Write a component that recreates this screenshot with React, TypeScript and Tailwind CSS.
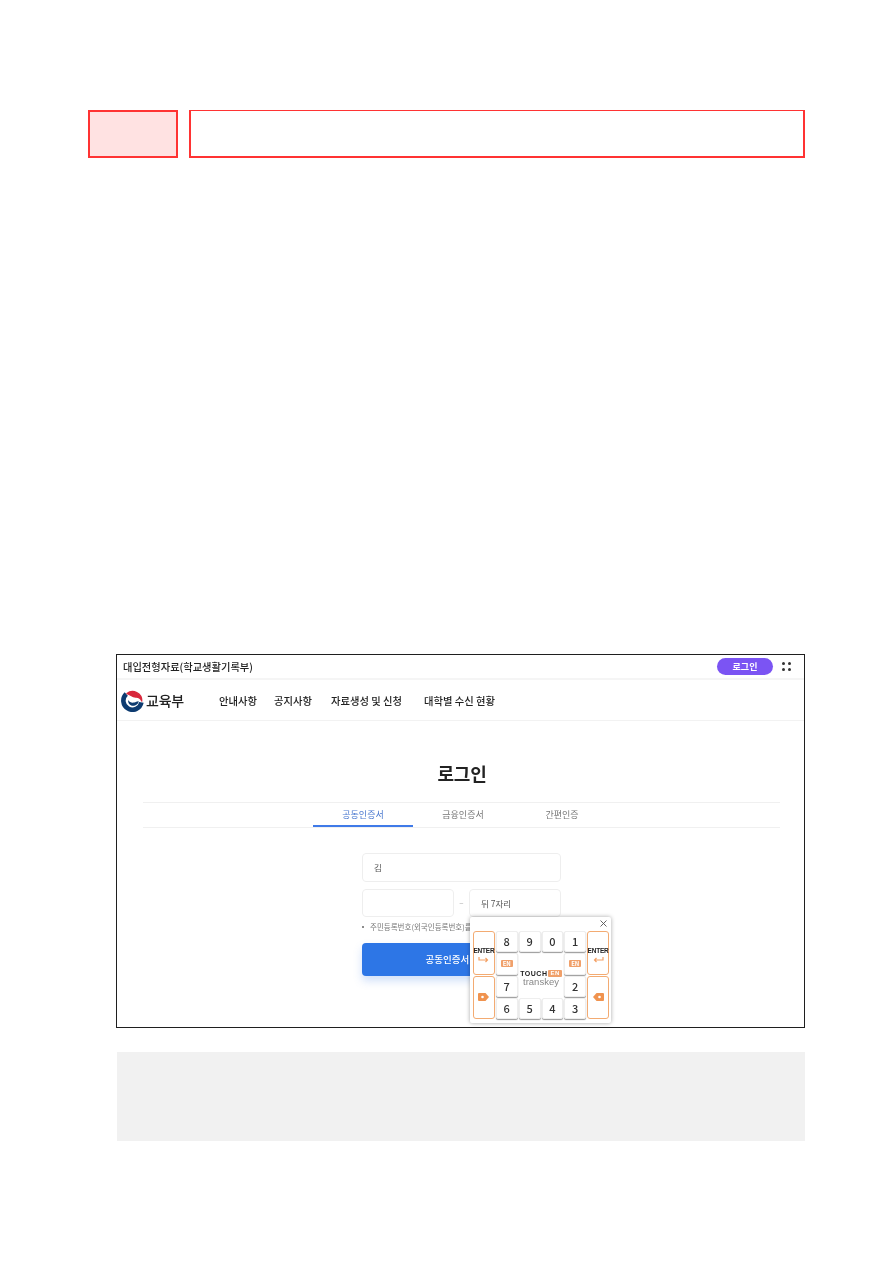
import React from "react";

const font = { fontFamily: '"Noto Sans CJK KR","Noto Sans",sans-serif' };

function Key({ children, className = "" }: { children?: React.ReactNode; className?: string }) {
  return (
    <div className={`flex items-center justify-center rounded-[2px] border border-[#eeeeee] bg-white shadow-[0_1px_1px_rgba(0,0,0,0.4)] text-[11px] font-medium text-[#333] ${className}`}>
      {children}
    </div>
  );
}

function En() {
  return (
    <span className="rounded-[1px] bg-[#f0a06a] px-[2px] text-[6px] leading-[7px] font-bold text-white">EN</span>
  );
}

function EnterKey({ flip }: { flip?: boolean }) {
  return (
    <div className="row-span-2 flex flex-col items-center justify-center rounded-[3px] border border-[#f3ab72] bg-white pt-[4px]">
      <span className="text-[6.5px] leading-[10px] font-bold tracking-[-0.2px] text-[#222]" style={{ fontFamily: '"Liberation Sans",sans-serif' }}>ENTER</span>
      <svg width="11" height="8" viewBox="0 0 11 8" fill="none" stroke="#f3a064" strokeWidth="1.2">
        {flip ? <path d="M10 1v3H1.500M3.500 2 1.500 4l2 2" /> : <path d="M1 1v3h8.500M7.500 2l2 2-2 2" />}
      </svg>
    </div>
  );
}

function BackKey({ side }: { side: "left" | "right" }) {
  const isLeftColumn = side === "left";
  return (
    <div className="row-span-2 flex items-center justify-center rounded-[3px] border border-[#f3ab72] bg-white">
      <svg width="11" height="8" viewBox="0 0 11 8">
        <path d={isLeftColumn ? "M1 0h6.500L11 4 7.500 8H1a1 1 0 0 1-1-1V1a1 1 0 0 1 1-1z" : "M10 0H3.500L0 4l3.500 4H10a1 1 0 0 0 1-1V1a1 1 0 0 0-1-1z"} fill="#f0934f" />
        <circle cx={isLeftColumn ? 4.5 : 6.5} cy="4" r="1.300" fill="#fff" />
      </svg>
    </div>
  );
}

function Keypad() {
  return (
    <div className="absolute left-[353px] top-[262px] h-[106px] w-[141px] rounded-[2px] bg-white pl-[3px] pr-[2px] pt-[14px] shadow-[0_0_4px_rgba(0,0,0,0.35)]">
      <svg className="absolute right-[4px] top-[3px]" width="7" height="7" viewBox="0 0 7 7" stroke="#555" strokeWidth="0.9">
        <path d="M0.5 0.5l6 6M6.5 0.5l-6 6" />
      </svg>
      <div className="grid h-[88px] grid-cols-6 grid-rows-4 gap-x-[1px] gap-y-[1px]">
        <EnterKey />
        <Key>8</Key>
        <Key>9</Key>
        <Key>0</Key>
        <Key>1</Key>
        <EnterKey flip />
        <Key><En /></Key>
        <div className="col-span-2 row-span-2 flex flex-col items-center justify-center pt-[6px]">
          <div className="flex items-center gap-[1px] text-[7px] leading-[7px] font-bold tracking-[0.5px] text-[#222]" style={{ fontFamily: '"Liberation Sans",sans-serif' }}>
            TOUCH<En />
          </div>
          <div className="text-[9.5px] leading-[9px] text-[#888]" style={{ fontFamily: '"Liberation Sans",sans-serif' }}>transkey</div>
        </div>
        <Key><En /></Key>
        <BackKey side="left" />
        <Key>7</Key>
        <Key>2</Key>
        <BackKey side="right" />
        <Key>6</Key>
        <Key>5</Key>
        <Key>4</Key>
        <Key>3</Key>
      </div>
    </div>
  );
}

function Logo() {
  return (
    <svg width="23" height="23" viewBox="0 0 24 24" className="shrink-0" fill="none">
      <circle cx="12" cy="12" r="12" fill="#ffffff" />
      <path d="M5.500 5.200A9.500 9.500 0 1 0 21.300 14" stroke="#0d3b70" strokeWidth="4.800" />
      <path d="M6.200 4.700A9.700 9.700 0 0 1 21.700 12.500C20.500 9 18 8.200 15.500 8.300 12 8.500 9.800 5.800 6.200 4.700Z" fill="#d8283c" stroke="#d8283c" strokeWidth="1.500" strokeLinejoin="round" />
      <path d="M7.500 11.500c1.300 2.300 3.800 3.300 6.200 2.700 2-.5 3-1.800 4.800-1.500-.4 2.800-3 4.800-6 4.800-3.200 0-5.400-2.600-5-6Z" fill="#0d3b70" />
    </svg>
  );
}

function Shot() {
  return (
    <div className="relative ml-[116px] h-[374px] w-[689px] border border-[#1f1f1f] bg-white">
      <div className="h-full w-full blur-[0.35px]">
        <div className="flex h-[25px] items-center justify-between border-b-2 border-[#f5f5f5] pl-[6px] pr-[13px]">
          <span className="text-[10.25px] font-medium text-[#222]">대입전형자료(학교생활기록부)</span>
          <div className="flex items-center gap-[9px]">
            <div className="flex h-[17px] w-[56px] items-center justify-center rounded-full bg-[#7b54f3] text-[9px] font-bold text-white">로그인</div>
            <div className="grid grid-cols-2 gap-x-[3px] gap-y-[3px]">
              <i className="block h-[3px] w-[3px] rounded-full bg-[#333]" />
              <i className="block h-[3px] w-[3px] rounded-full bg-[#333]" />
              <i className="block h-[3px] w-[3px] rounded-full bg-[#333]" />
              <i className="block h-[3px] w-[3px] rounded-full bg-[#333]" />
            </div>
          </div>
        </div>
        <div className="flex h-[41px] items-center border-b border-[#f2f2f2] pl-[4px]">
          <Logo />
          <span className="ml-[2px] w-[63px] text-[14px] leading-none font-medium tracking-[-0.2px] text-[#222]">교육부</span>
          <nav className="ml-[10px] flex pt-[1px] text-[10.3px] font-medium text-[#222]">
            <span className="w-[55px]">안내사항</span>
            <span className="w-[57px]">공지사항</span>
            <span className="w-[93px]">자료생성 및 신청</span>
            <span>대학별 수신 현황</span>
          </nav>
        </div>
        <div className="pl-[3px] pt-[38px] text-center text-[18px] leading-[28px] font-semibold tracking-[-0.3px] text-[#222]">로그인</div>
        <div className="ml-[26px] mr-[24px] mt-[15px] flex h-[26px] justify-center border-y border-[#f0f0f0] pl-[3px] text-[9px]">
          <div className="flex w-[100px] items-center justify-center border-b-2 border-[#3f7ae8] pt-[2px] text-[#4a78cf]">공동인증서</div>
          <div className="flex w-[100px] items-center justify-center text-[#777]">금융인증서</div>
          <div className="flex w-[100px] items-center justify-center pr-[2px] text-[#777]">간편인증</div>
        </div>
        <div className="ml-[245px] mt-[25px] w-[199px]">
          <div className="flex h-[29px] items-center rounded-[4px] border border-[#eeeeee] pl-[11px] text-[8.5px] text-[#555]">김</div>
          <div className="mt-[7px] flex items-center">
            <div className="h-[28px] w-[92px] rounded-[4px] border border-[#eeeeee]" />
            <span className="w-[15px] text-center text-[8px] text-[#aaa]">–</span>
            <div className="flex h-[28px] flex-1 items-center rounded-[4px] border border-[#eeeeee] pl-[11px] text-[8.5px] text-[#555]">뒤 7자리</div>
          </div>
          <div className="mt-[4px] flex h-[12px] items-center whitespace-nowrap text-[7.5px] text-[#777]">
            <i className="mr-[6px] block h-[2px] w-[2px] rounded-full bg-[#666]" />
            주민등록번호(외국인등록번호)를 입력해주세요
          </div>
          <div className="mt-[10px] flex h-[33px] items-center justify-center rounded-[4px] bg-[#2d76e6] text-[9.5px] font-medium text-white shadow-[0_5px_8px_rgba(70,130,230,0.25)]">공동인증서 로그인</div>
        </div>
        <Keypad />
      </div>
    </div>
  );
}

export default function App() {
  return (
    <div className="h-[1262px] w-[893px] overflow-hidden bg-white" style={font}>
      <div className="flex pl-[88px] pt-[110px]">
        <div className="h-[48px] w-[90px] border-2 border-[#ff3333] bg-[#ffe2e2]" />
        <div className="ml-[11px] h-[48px] w-[616px] border-2 border-t border-[#ff3333] bg-white" />
      </div>
      <div className="mt-[496px]">
        <Shot />
      </div>
      <div className="ml-[117px] mt-[24px] h-[89px] w-[688px] bg-[#f1f1f1]" />
    </div>
  );
}
